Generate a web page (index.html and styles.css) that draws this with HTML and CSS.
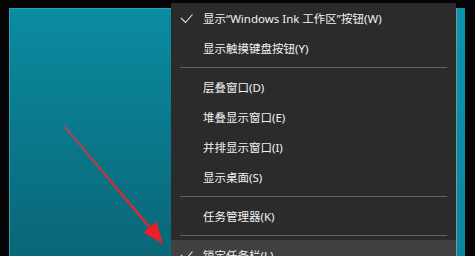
FILE: index.html
```html
<!DOCTYPE html>
<html lang="zh-CN">
<head>
<meta charset="utf-8">
<title>任务栏菜单</title>
<link rel="stylesheet" href="styles.css">
</head>
<body>
<div class="screen">
  <div class="desktop">
    <svg class="arrow" width="162" height="248" viewBox="0 0 162 248">
      <defs>
        <linearGradient id="ag" x1="56" y1="119" x2="143" y2="222" gradientUnits="userSpaceOnUse">
          <stop offset="0" stop-color="#c2404c" stop-opacity="0.7"/>
          <stop offset="1" stop-color="#ee1f27"/>
        </linearGradient>
      </defs>
      <line x1="56" y1="119" x2="142" y2="221" stroke="url(#ag)" stroke-width="2.5" stroke-linecap="round"/>
      <polygon points="154,236 147.5,213.5 134.5,224.5" fill="#ee1f27"/>
    </svg>
  </div>
  <div class="menu">
    <div class="item checked">
      <svg class="check" width="14" height="11" viewBox="0 0 14 11"><polyline points="1,5 5.5,9.5 12.5,1.5" fill="none" stroke="#e6e6e6" stroke-width="1.1"/></svg>
      <span>显示“Windows Ink 工作区”按钮(W)</span>
    </div>
    <div class="item"><span>显示触摸键盘按钮(Y)</span></div>
    <div class="sep"></div>
    <div class="item"><span>层叠窗口(D)</span></div>
    <div class="item"><span>堆叠显示窗口(E)</span></div>
    <div class="item"><span>并排显示窗口(I)</span></div>
    <div class="item"><span>显示桌面(S)</span></div>
    <div class="sep"></div>
    <div class="item"><span>任务管理器(K)</span></div>
    <div class="sep"></div>
    <div class="item checked hover">
      <svg class="check" width="14" height="11" viewBox="0 0 14 11"><polyline points="1,5 5.5,9.5 12.5,1.5" fill="none" stroke="#e6e6e6" stroke-width="1.1"/></svg>
      <span>锁定任务栏(L)</span>
    </div>
  </div>
  <div class="edge"></div>
  <div class="strip"></div>
</div>
</body>
</html>
```

FILE: styles.css
```css
html, body {
  margin: 0;
  padding: 0;
  background: #000;
}

.screen {
  display: flex;
  width: 475px;
  height: 256px;
  overflow: hidden;
  padding-left: 9px;
  box-sizing: border-box;
  background: #050507;
}

.desktop {
  position: relative;
  width: 162px;
  flex: none;
  margin-top: 8px;
  background: linear-gradient(180deg, #0b8ca1 0%, #0a7a8e 45%, #0a6778 100%);
  box-shadow: inset 1px 1px 0 #2a9fb2;
}

.arrow {
  position: absolute;
  left: 0;
  top: 0;
}

.menu {
  width: 285px;
  flex: none;
  margin-top: 3px;
  background: #2b2b2b;
  font-family: "Noto Sans", "Noto Sans CJK SC", sans-serif;
  font-size: 11.5px;
  color: #f2f2f2;
}

.item {
  position: relative;
  height: 30px;
  display: flex;
  align-items: center;
  padding-left: 32px;
  white-space: nowrap;
}

.item.hover {
  background: #414141;
}

.check {
  position: absolute;
  left: 9px;
  top: 10px;
}

.sep {
  height: 9px;
  margin: 0 9px;
  display: flex;
  align-items: center;
}

.sep::before {
  content: "";
  flex: 1;
  height: 1px;
  background: #636363;
}

.edge {
  width: 1px;
  flex: none;
  margin-top: 8px;
  background: #6f9aa5;
}

.strip {
  width: 8px;
  flex: none;
  margin-top: 8px;
  background: linear-gradient(180deg, #0c93ad 0%, #0a86a0 100%);
}
```
